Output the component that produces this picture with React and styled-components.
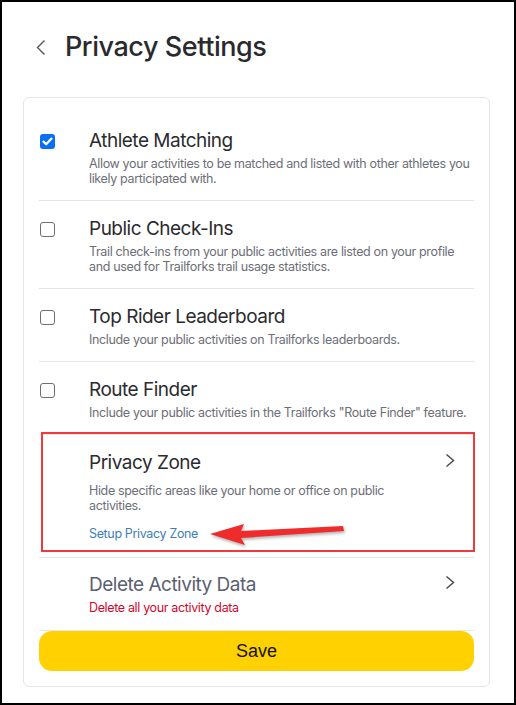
import styled, { createGlobalStyle } from "styled-components";

const GlobalStyle = createGlobalStyle`
  html, body {
    margin: 0;
    padding: 0;
    background: #fff;
  }
  * {
    box-sizing: border-box;
  }
`;

const Frame = styled.div`
  width: 516px;
  height: 705px;
  border: 2px solid #000;
  background: #fff;
  font-family: Inter, "Noto Sans", sans-serif;
  overflow: hidden;
`;

const Header = styled.div`
  display: flex;
  align-items: center;
  gap: 19px;
  padding: 29px 0 0 34px;
`;

const BackButton = styled.button`
  display: flex;
  align-items: center;
  justify-content: center;
  width: 10px;
  height: 32px;
  padding: 0;
  border: none;
  background: none;
  color: #555;
  cursor: pointer;
`;

const Title = styled.h1`
  margin: 0;
  font-size: 27px;
  line-height: 32px;
  font-weight: 500;
  color: #2a2a2e;
  letter-spacing: -0.45px;
`;

const Card = styled.div`
  margin: 34px 24px 0 21px;
  padding: 15px 15px 15px;
  border: 1px solid #e6e6e6;
  border-radius: 6px;
`;

const Row = styled.div`
  position: relative;
  display: grid;
  grid-template-columns: 50px 1fr ${(p) => (p.$chevron ? "44px" : "0")};
  padding: ${(p) => p.$pad || "16px 0 14px"};
  border-bottom: 1px solid #e6e6e6;
`;

const CheckCell = styled.div`
  height: 24px;
  display: flex;
  align-items: center;
  padding-left: 1px;
`;

const Box = styled.span`
  display: flex;
  align-items: center;
  justify-content: center;
  width: 15px;
  height: 15px;
  border-radius: 3px;
  background: ${(p) => (p.$checked ? "#0b6ff5" : "#fff")};
  border: ${(p) => (p.$checked ? "none" : "1.5px solid #6e6e6e")};
`;

const Texts = styled.div`
  display: flex;
  flex-direction: column;
`;

const ItemTitle = styled.div`
  font-size: 19px;
  line-height: 24px;
  font-weight: 400;
  color: ${(p) => p.$color || "#2b2b2f"};
  letter-spacing: -0.5px;
`;

const Desc = styled.div`
  margin-top: ${(p) => p.$gap || "3px"};
  font-size: 12.5px;
  line-height: 15px;
  color: ${(p) => p.$color || "#6d6e78"};
  letter-spacing: -0.35px;
`;

const Link = styled.a`
  margin-top: 13px;
  font-size: 12.5px;
  line-height: 15px;
  color: #3d7db8;
  letter-spacing: -0.35px;
  text-decoration: none;
`;

const ChevronCell = styled.div`
  display: flex;
  justify-content: flex-end;
  padding: 2px 19px 0 0;
  color: #444;
`;

const Highlight = styled.div`
  position: absolute;
  top: -3px;
  left: 2px;
  right: -1px;
  bottom: 5px;
  border: 2px solid #f0393b;
  pointer-events: none;
`;

const Arrow = styled.svg`
  position: absolute;
  left: 170px;
  top: 85px;
  filter: drop-shadow(1px 2px 1.5px rgba(0, 0, 0, 0.3));
`;

const SaveButton = styled.button`
  display: block;
  width: 100%;
  height: 40px;
  border: none;
  border-radius: 13px;
  background: #ffd100;
  font-family: "Liberation Sans", Arial, sans-serif;
  font-size: 18px;
  color: #111;
  cursor: pointer;
`;

const Check = () => (
  <svg width="11" height="9" viewBox="0 0 11 9">
    <path d="M1.5 4.6 L4.2 7.2 L9.5 1.6" fill="none" stroke="#fff" strokeWidth="2.2" strokeLinecap="round" strokeLinejoin="round" />
  </svg>
);

const Chevron = ({ dir = "right", h = 15 }) => (
  <svg width="10" height={h} viewBox={`0 0 10 ${h}`}>
    <path
      d={
        dir === "right"
          ? `M1.5 1.5 L8.5 ${h / 2} L1.5 ${h - 1.5}`
          : `M8.5 1.5 L1.5 ${h / 2} L8.5 ${h - 1.5}`
      }
      fill="none"
      stroke="currentColor"
      strokeWidth="1.4"
    />
  </svg>
);

const toggles = [
  {
    title: "Athlete Matching",
    desc: "Allow your activities to be matched and listed with other athletes you likely participated with.",
    checked: true,
  },
  {
    title: "Public Check-Ins",
    desc: "Trail check-ins from your public activities are listed on your profile and used for Trailforks trail usage statistics.",
  },
  {
    title: "Top Rider Leaderboard",
    desc: "Include your public activities on Trailforks leaderboards.",
  },
  {
    title: "Route Finder",
    desc: 'Include your public activities in the Trailforks "Route Finder" feature.',
  },
];

export default function App() {
  return (
    <Frame>
      <GlobalStyle />
      <Header>
        <BackButton aria-label="Back">
          <Chevron dir="left" h={17} />
        </BackButton>
        <Title>Privacy Settings</Title>
      </Header>
      <Card>
        {toggles.map((t) => (
          <Row key={t.title}>
            <CheckCell>
              <Box $checked={t.checked}>{t.checked && <Check />}</Box>
            </CheckCell>
            <Texts>
              <ItemTitle>{t.title}</ItemTitle>
              <Desc>{t.desc}</Desc>
            </Texts>
            <div />
          </Row>
        ))}
        <Row $chevron $pad="16px 0 16px">
          <div />
          <Texts>
            <ItemTitle>Privacy Zone</ItemTitle>
            <Desc $gap="8px">Hide specific areas like your home or office on public activities.</Desc>
            <Link href="#">Setup Privacy Zone</Link>
          </Texts>
          <ChevronCell>
            <Chevron />
          </ChevronCell>
          <Highlight />
          <Arrow width="140" height="32" viewBox="0 0 140 32">
            <polygon points="1,14 35,4 32,11 134,6 135,11 32,18 36,25" fill="#f02b2b" />
          </Arrow>
        </Row>
        <Row $chevron $pad="15px 0 15px">
          <div />
          <Texts>
            <ItemTitle $color="#5a6070">Delete Activity Data</ItemTitle>
            <Desc $gap="3px" $color="#d1062b">Delete all your activity data</Desc>
          </Texts>
          <ChevronCell>
            <Chevron />
          </ChevronCell>
        </Row>
        <SaveButton>Save</SaveButton>
      </Card>
    </Frame>
  );
}
